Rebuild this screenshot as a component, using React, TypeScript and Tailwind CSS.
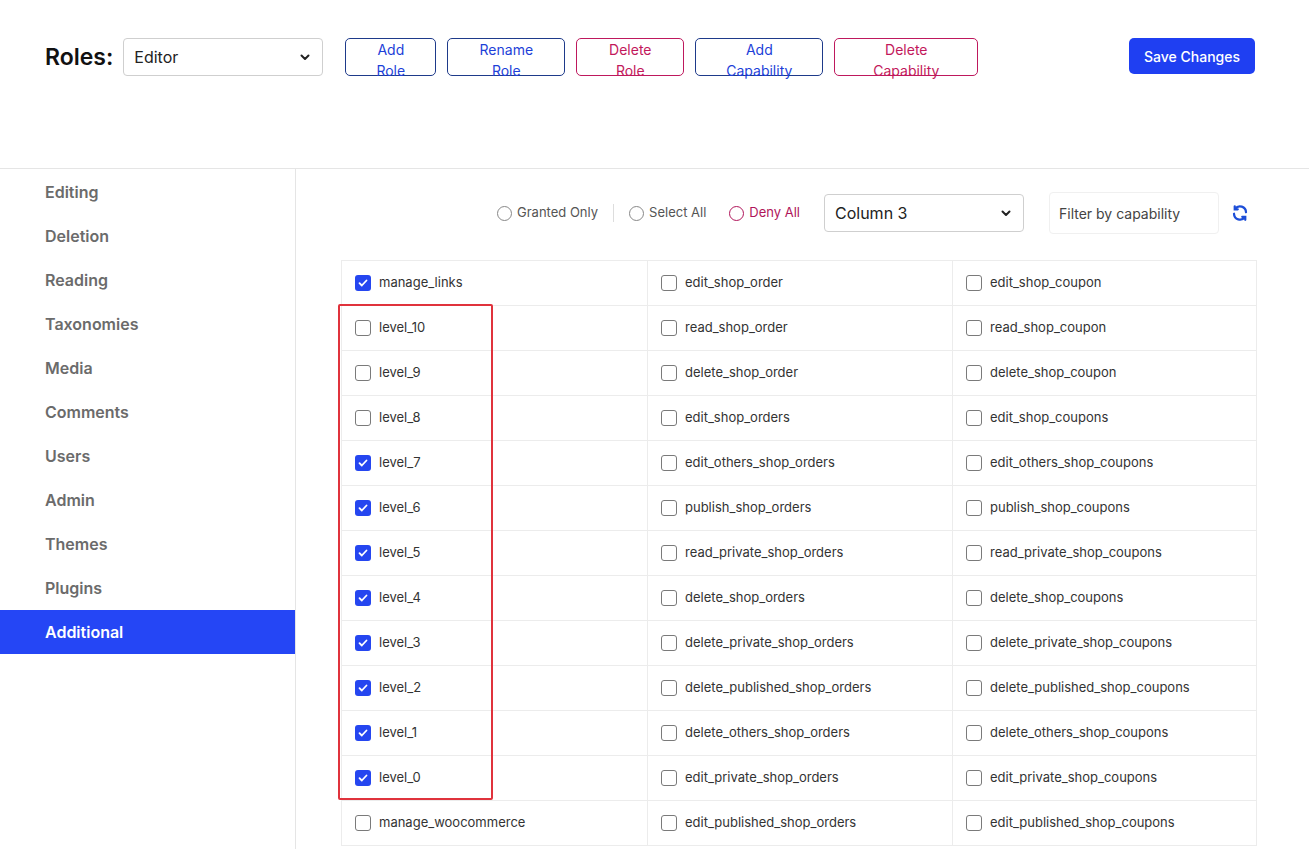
import React from "react";

const rows: [string, boolean, string, string][] = [
  ["manage_links", true, "edit_shop_order", "edit_shop_coupon"],
  ["level_10", false, "read_shop_order", "read_shop_coupon"],
  ["level_9", false, "delete_shop_order", "delete_shop_coupon"],
  ["level_8", false, "edit_shop_orders", "edit_shop_coupons"],
  ["level_7", true, "edit_others_shop_orders", "edit_others_shop_coupons"],
  ["level_6", true, "publish_shop_orders", "publish_shop_coupons"],
  ["level_5", true, "read_private_shop_orders", "read_private_shop_coupons"],
  ["level_4", true, "delete_shop_orders", "delete_shop_coupons"],
  ["level_3", true, "delete_private_shop_orders", "delete_private_shop_coupons"],
  ["level_2", true, "delete_published_shop_orders", "delete_published_shop_coupons"],
  ["level_1", true, "delete_others_shop_orders", "delete_others_shop_coupons"],
  ["level_0", true, "edit_private_shop_orders", "edit_private_shop_coupons"],
  ["manage_woocommerce", false, "edit_published_shop_orders", "edit_published_shop_coupons"],
];

const side = ["Editing", "Deletion", "Reading", "Taxonomies", "Media", "Comments", "Users", "Admin", "Themes", "Plugins", "Additional"];

function Box({ on }: { on: boolean }) {
  return on ? (
    <span className="w-4 h-4 rounded-[3px] bg-[#2546f0] flex items-center justify-center shrink-0">
      <svg width="12" height="12" viewBox="0 0 12 12"><path d="M2.5 6.2l2.3 2.3L9.5 3.5" stroke="#fff" strokeWidth="1.8" fill="none" strokeLinecap="round" strokeLinejoin="round" /></svg>
    </span>
  ) : (
    <span className="w-4 h-4 rounded-[3px] border border-[#7a7a7a] bg-white shrink-0" />
  );
}

function Chevron() {
  return <svg width="14" height="14" viewBox="0 0 14 14"><path d="M3.5 5.5L7 9l3.5-3.5" stroke="#222" strokeWidth="2" fill="none" strokeLinecap="round" strokeLinejoin="round" /></svg>;
}

function Cell({ label, on }: { label: string; on: boolean }) {
  return (
    <div className="flex items-center gap-2 pl-[13px] h-[45px] border-b border-r border-[#ececec] text-[13px] text-[#333]">
      <Box on={on} />
      <span>{label}</span>
    </div>
  );
}

export default function App() {
  const btn = "h-[38px] px-4 rounded-[5px] border text-[14px] bg-white";
  return (
    <div className="w-[1309px] h-[849px] overflow-hidden bg-white relative" style={{ fontFamily: "Inter, 'Noto Sans', sans-serif" }}>
      <div className="h-[169px] border-b border-[#e5e5e5] flex items-start pt-[38px] pl-[45px] pr-[54px]">
        <div className="flex items-center h-[38px]">
          <span className="text-[23px] font-semibold text-[#111] mr-[10px]">Roles:</span>
          <div className="w-[200px] h-[38px] border border-[#cfcfcf] rounded-[4px] flex items-center justify-between px-[10px] text-[16px] text-[#222] mr-[22px]">
            Editor <Chevron />
          </div>
          <div className="flex gap-[11px]">
            <button className={`${btn} border-[#1e3a8a] text-[#1d3fd8] w-[91px]`}>Add Role</button>
            <button className={`${btn} border-[#1e3a8a] text-[#1d3fd8] w-[118px]`}>Rename Role</button>
            <button className={`${btn} border-[#be185d] text-[#c2185b] w-[108px]`}>Delete Role</button>
            <button className={`${btn} border-[#1e3a8a] text-[#1d3fd8] w-[128px]`}>Add Capability</button>
            <button className={`${btn} border-[#be185d] text-[#c2185b] w-[144px]`}>Delete Capability</button>
          </div>
        </div>
        <div className="ml-auto">
          <button className="h-[36px] w-[126px] rounded-[5px] bg-[#1f3ff2] text-white text-[14px] font-medium">Save Changes</button>
        </div>
      </div>
      <div className="flex">
        <div className="w-[296px] border-r border-[#e5e5e5] h-[680px] pt-[1px] shrink-0">
          {side.map((s) => (
            <div key={s} className={`h-[44px] flex items-center pl-[45px] text-[16px] font-semibold ${s === "Additional" ? "bg-[#2546f5] text-white" : "text-[#6b6b6b]"}`}>{s}</div>
          ))}
        </div>
        <div className="flex-1 pl-[45px] pr-[53px]">
          <div className="h-[91px] flex items-center justify-end gap-0 pb-[3px] text-[13px]">
            <label className="flex items-center gap-[5px] text-[#555]"><span className="w-[15px] h-[15px] rounded-full border border-[#888]" />Granted Only</label>
            <span className="w-px h-[18px] bg-[#ddd] mx-[15px]" />
            <label className="flex items-center gap-[5px] text-[#555]"><span className="w-[15px] h-[15px] rounded-full border border-[#888]" />Select All</label>
            <label className="flex items-center gap-[5px] text-[#b0155a] ml-[23px]"><span className="w-[15px] h-[15px] rounded-full border border-[#b0155a]" />Deny All</label>
            <div className="ml-[24px] w-[200px] h-[38px] border border-[#cfcfcf] rounded-[4px] flex items-center justify-between px-[10px] text-[16px] text-[#222]">
              Column 3 <Chevron />
            </div>
            <div className="ml-[25px] w-[170px] h-[42px] border border-[#f0f0f0] rounded-[4px] flex items-center px-[9px] text-[14px] text-[#444]">Filter by capability</div>
            <svg className="ml-[12px] mr-[8px]" width="18" height="18" viewBox="0 0 24 24" fill="none" stroke="#1d4ed8" strokeWidth="3" strokeLinecap="round"><path d="M20 11a8 8 0 0 0-14.5-4.5" /><path d="M4 13a8 8 0 0 0 14.5 4.5" /><path d="M5 3v4h4" /><path d="M19 21v-4h-4" /></svg>
          </div>
          <div className="grid grid-cols-[306px_305px_304px] border-t border-l border-[#ececec] relative">
            {rows.map((r) => (
              <React.Fragment key={r[0]}>
                <Cell label={r[0]} on={r[1]} />
                <Cell label={r[2]} on={false} />
                <Cell label={r[3]} on={false} />
              </React.Fragment>
            ))}
            <div className="absolute left-[-4px] top-[43px] w-[155px] h-[496px] border-2 border-[#e0323c] rounded-[2px] pointer-events-none" />
          </div>
        </div>
      </div>
    </div>
  );
}
